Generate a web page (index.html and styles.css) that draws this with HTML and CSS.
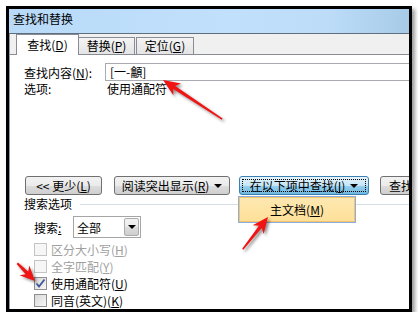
FILE: index.html
```html
<!DOCTYPE html>
<html lang="zh-CN">
<head>
  <meta charset="UTF-8">
  <title>查找和替换</title>
  <link rel="stylesheet" href="styles.css">
</head>
<body>
  <div class="shot">
    <div class="titlebar">查找和替换</div>
    <div class="window">
      <div class="frame"></div>
      <div class="dialog">
        <div class="tabs">
          <div class="tab active">查找(<u>D</u>)</div>
          <div class="tab tab-replace">替换(<u>P</u>)</div>
          <div class="tab tab-goto">定位(<u>G</u>)</div>
        </div>
        <div class="panel">
          <div class="find-row">
            <span class="find-label">查找内容(<u>N</u>):</span>
            <div class="textbox">[一-龥]</div>
          </div>
          <div class="opt-row">
            <span class="opt-label">选项:</span>
            <span>使用通配符</span>
          </div>

          <div class="buttons">
            <div class="btn btn-less">&lt;&lt; 更少(<u>L</u>)</div>
            <div class="btn btn-read">阅读突出显示(<u>R</u>)<span class="caret"></span></div>
            <div class="btn btn-in focus">在以下项中查找(<u>I</u>)<span class="caret"></span></div>
            <div class="btn btn-next">查找下一处(<u>F</u>)</div>
          </div>

          <div class="group">
            <span>搜索选项</span>
            <i class="rule"></i>
          </div>

          <div class="search-row">
            <span class="search-label">搜索<u>:</u></span>
            <div class="combo">
              <span class="combo-text">全部</span>
              <span class="combo-drop"><span class="caret"></span></span>
            </div>
          </div>

          <div class="check disabled first">
            <span class="box"></span>区分大小写(<u>H</u>)
          </div>
          <div class="check disabled">
            <span class="box"></span>全字匹配(<u>Y</u>)
          </div>
          <div class="check">
            <span class="box checked">
              <svg width="11" height="11" viewBox="0 0 11 11"><path d="M1.5 5.5 L4 8.5 L9.5 1.5" fill="none" stroke="#3e5697" stroke-width="1.8"/></svg>
            </span>使用通配符(<u>U</u>)
          </div>
          <div class="check">
            <span class="box"></span>同音(英文)(<u>K</u>)
          </div>

          <div class="menu">主文档(<u>M</u>)</div>
        </div>
      </div>
    </div>

    <svg class="arrows" width="418" height="318" viewBox="0 0 418 318">
      <g transform="translate(163 80) rotate(213.5)">
        <path d="M0 0 L-17 -7 L-13.5 -1.8 L-71 -0.8 L-71 0.8 L-13.5 1.8 L-17 7 Z"/>
      </g>
      <g transform="translate(268 217) rotate(-52)">
        <path d="M0 0 L-16 -7 L-12.5 -1.8 L-41 -0.8 L-41 0.8 L-12.5 1.8 L-16 7 Z"/>
      </g>
      <g transform="translate(35 281) rotate(45)">
        <path d="M0 0 L-15 -7 L-11.5 -1.8 L-25 -1 L-25 1 L-11.5 1.8 L-15 7 Z"/>
      </g>
    </svg>
  </div>
</body>
</html>
```

FILE: styles.css
```css
* {
  box-sizing: border-box;
}

body {
  margin: 0;
  background: #fff;
  font-family: "Noto Sans CJK SC", "Noto Sans", sans-serif;
  font-size: 12px;
  color: #000;
}

u {
  text-underline-offset: 1px;
}

.shot {
  position: relative;
  margin: 6px 0 0 6px;
  width: 406px;
  height: 306px;
  border: 3px solid #000;
  overflow: hidden;
  background: #fff;
  box-shadow: 3px 3px 4px rgba(0, 0, 0, 0.4);
}

.titlebar {
  height: 25px;
  padding-left: 4px;
  line-height: 20px;
  border-bottom: 1px solid #5f6f80;
  background: linear-gradient(to right, #b8daf8, #c1e0fc 55%, #bcdcf8 80%, #a7cbe7);
}

.window {
  display: flex;
  height: 275px;
}

.frame {
  width: 3px;
  background: linear-gradient(to right, #d8e8f6, #bcd5eb);
}

.dialog {
  flex: 1;
  display: flex;
  flex-direction: column;
  border-left: 1px solid #8e9aa6;
  background: #f0f0f0;
}

/* tabs */
.tabs {
  height: 26px;
  display: flex;
  align-items: flex-end;
  padding-left: 6px;
}

.tab {
  height: 17px;
  border: 1px solid #898c95;
  border-bottom: none;
  background: linear-gradient(#f4f4f4, #e4e4e4);
  text-align: center;
  line-height: 16px;
}

.tab.active {
  position: relative;
  z-index: 1;
  width: 63px;
  height: 21px;
  margin-bottom: -1px;
  background: #fff;
  line-height: 20px;
}

.tab-replace {
  width: 57px;
  margin-left: -1px;
}

.tab-goto {
  width: 58px;
  margin-left: 1px;
}

/* panel */
.panel {
  position: relative;
  flex: 1;
  background: #fff;
  border-top: 1px solid #898c95;
  padding-left: 14px;
}

.find-row {
  display: flex;
  align-items: center;
  height: 18px;
  margin-top: 8px;
}

.find-label {
  width: 81px;
  flex-shrink: 0;
}

.textbox {
  flex: 1;
  height: 18px;
  padding-left: 4px;
  line-height: 16px;
  border: 1px solid #a9abb1;
  border-right: none;
}

.opt-row {
  display: flex;
  margin-top: 1px;
  line-height: 14px;
}

.opt-label {
  width: 83px;
}

/* buttons */
.buttons {
  display: flex;
  margin-top: 80px;
  margin-left: 1px;
}

.btn {
  position: relative;
  flex-shrink: 0;
  display: flex;
  align-items: center;
  justify-content: center;
  height: 19px;
  border: 1px solid #707070;
  border-radius: 3px;
  background: linear-gradient(#f2f2f2, #ebebeb 50%, #dddddd 50%, #cfcfcf);
  white-space: nowrap;
  line-height: 17px;
}

.btn-less {
  width: 77px;
}

.btn-read {
  width: 116px;
  margin-left: 12px;
}

.btn-in {
  width: 130px;
  margin-left: 9px;
  border-color: #3c7fb1;
  background: linear-gradient(#e5f4fc, #c4e5f6 50%, #98d1ef 50%, #6fb7de);
}

.btn-next {
  width: 100px;
  margin-left: 11px;
  justify-content: flex-start;
  padding-left: 8px;
}

.btn.focus::after {
  content: "";
  position: absolute;
  inset: 2px;
  border: 1px dotted #000;
}

.caret {
  display: inline-block;
  margin-left: 5px;
  border-left: 4px solid transparent;
  border-right: 4px solid transparent;
  border-top: 4px solid #000;
}

/* search options */
.group {
  display: flex;
  align-items: center;
  margin-top: 2px;
  line-height: 14px;
}

.rule {
  flex: 1;
  height: 1px;
  margin-left: 8px;
  background: #d5dfe5;
}

.search-row {
  display: flex;
  align-items: center;
  margin-top: 5px;
  padding-left: 10px;
}

.search-label {
  width: 39px;
}

.combo {
  display: flex;
  align-items: center;
  width: 68px;
  height: 22px;
  border: 1px solid #a5a5a5;
}

.combo-text {
  flex: 1;
  padding-left: 3px;
}

.combo-drop {
  display: flex;
  align-items: center;
  justify-content: center;
  width: 15px;
  height: 18px;
  margin-right: 1px;
  border: 1px solid #acacac;
  border-radius: 2px;
  background: linear-gradient(#f2f2f2, #ebebeb 50%, #dddddd 50%, #cfcfcf);
}

.combo-drop .caret {
  margin-left: 0;
}

.check {
  display: flex;
  align-items: center;
  height: 17px;
  padding-left: 10px;
}

.check.first {
  margin-top: 3px;
}

.box {
  display: flex;
  align-items: center;
  justify-content: center;
  width: 13px;
  height: 13px;
  margin-right: 4px;
  border: 1px solid #8f8f8f;
  background: linear-gradient(135deg, #d8d8d8, #f7f7f7);
}

.check.disabled {
  color: #a0a0a0;
}

.check.disabled .box {
  border-color: #c4c4c4;
  background: #f6f6f6;
}

/* dropdown menu */
.menu {
  position: absolute;
  left: 228px;
  top: 141px;
  width: 118px;
  height: 27px;
  border: 1px solid #8aaedf;
  box-shadow: inset 0 0 0 1px #f3c56a;
  background: linear-gradient(#fee9b2, #fddf98);
  text-align: center;
  line-height: 25px;
}

.arrows {
  position: absolute;
  left: -9px;
  top: -9px;
  fill: #f01414;
  filter: drop-shadow(2px 2px 1.5px rgba(0, 0, 0, 0.45));
}
```
